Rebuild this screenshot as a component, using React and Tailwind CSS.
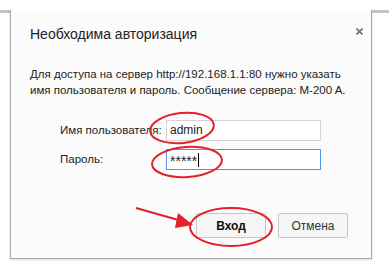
import React from 'react';

const font = { fontFamily: '"Liberation Sans", Arial, sans-serif' };

function Marks() {
  // red hand-drawn marks over the dialog
  return (
    <svg className="absolute left-0 top-0 pointer-events-none" width="389" height="264">
      <g fill="none" stroke="#e4202a" strokeWidth="2">
        <ellipse cx="182" cy="128" rx="32" ry="15" transform="rotate(-6 182 128)" />
        <ellipse cx="187" cy="162" rx="35" ry="15" transform="rotate(-4 187 162)" />
        <ellipse cx="231" cy="227" rx="41" ry="19" />
        <line x1="136" y1="208" x2="182" y2="221" />
      </g>
      <polygon points="193,225 178,213 175,228" fill="#e4202a" />
    </svg>
  );
}

export default function App() {
  return (
    <div className="relative w-[389px] h-[264px] bg-white text-[#222]" style={font}>
      <div className="flex items-start">
        <div className="w-[10px] mt-[10px] h-[3px] bg-[#c4c4c4]" />
        <div className="w-[362px] mt-[10px] h-[249px] bg-[#fbfbfb] border-l border-r border-b border-[#a9a9a9] shadow-[0_1px_2px_rgba(0,0,0,0.15)] flex flex-col">
          <div className="flex justify-between pl-[19px] pr-[7px] pt-[15px]">
            <h1 className="text-[14px] leading-[18px] font-normal">Необходима авторизация</h1>
            <svg width="7" height="7" className="mt-[3px] mr-[1px]">
              <path d="M0.5 0.5 L6.5 6.5 M6.5 0.5 L0.5 6.5" stroke="#6f6f6f" strokeWidth="1.6" />
            </svg>
          </div>
          <p className="px-[19px] mt-[23px] text-[11.5px] leading-[16px]">
            Для доступа на сервер http://192.168.1.1:80 нужно указать имя пользователя и пароль. Сообщение сервера: M-200 A.
          </p>
          <div className="mt-[22px] pl-[49px] grid grid-cols-[106px_155px] gap-y-[8px] items-center text-[11.5px]">
            <label className="whitespace-nowrap">Имя пользователя:</label>
            <div className="h-[21px] border border-[#d4d4d4] bg-white px-[3px] text-[12px] leading-[19px]">admin</div>
            <label className="whitespace-nowrap">Пароль:</label>
            <div className="h-[21px] border border-[#4d90fe] bg-white px-[3px] flex items-center">
              <span className="text-[14px] leading-[14px] mt-[3px]">*****</span>
              <span className="w-px h-[14px] bg-black ml-px" />
            </div>
          </div>
          <div className="mt-auto mb-[20px] flex justify-end gap-[12px] pr-[23px] text-[12px]">
            <button className="w-[70px] h-[25px] border border-[#c6c6c6] rounded-[2px] bg-[#f6f6f6] font-bold text-[#111]">Вход</button>
            <button className="w-[70px] h-[25px] border border-[#c6c6c6] rounded-[2px] bg-[#f6f6f6] text-[#333]">Отмена</button>
          </div>
        </div>
        <div className="flex-1 mt-[10px] h-[3px] bg-[#c4c4c4]" />
      </div>
      <Marks />
    </div>
  );
}
